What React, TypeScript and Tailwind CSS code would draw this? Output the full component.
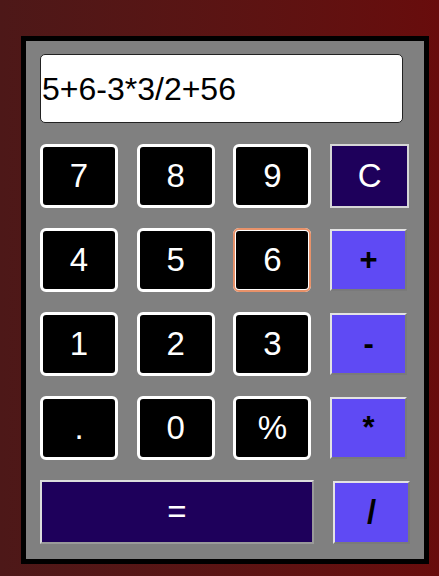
import React from 'react';

const NUM =
  'h-[64px] w-[78px] rounded-[6px] border-[3px] border-white bg-black text-white text-[33px] flex items-center justify-center';
const OP =
  'h-[62px] w-[77px] border-2 border-t-[#e3e3e3] border-l-[#e3e3e3] border-r-[#7a7a7a] border-b-[#7a7a7a] bg-[#5f4af4] text-black text-[31px] font-bold flex items-center justify-center';

export default function App() {
  const rows = [
    ['7', '8', '9', 'C'],
    ['4', '5', '6', '+'],
    ['1', '2', '3', '-'],
    ['.', '0', '%', '*'],
  ];

  return (
    <div
      className="w-[439px] h-[576px] bg-gradient-to-r from-[#4d1818] to-[#680c0c] pt-[36px] pl-[21px]"
      style={{ fontFamily: '"Liberation Sans", Arial, sans-serif' }}
    >
      <div className="w-[408px] border-[5px] border-black bg-[#808080] pt-[13px] pl-[14px] pb-[15px]">
        <div className="w-[363px] h-[69px] rounded-[5px] border border-[#222] bg-white flex items-center pl-[1px] text-[32px] text-black">
          5+6-3*3/2+56
        </div>
        <div className="mt-[21px] grid grid-cols-[78px_78px_78px_79px] gap-x-[18.7px] gap-y-[20px]">
          {rows.flat().map((k) => {
            if (k === 'C') {
              return (
                <button
                  key={k}
                  className="h-[64px] w-[79px] border-2 border-[#d6d6d6] bg-[#1e005b] text-white text-[33px] flex items-center justify-center"
                >
                  C
                </button>
              );
            }
            if (['+', '-', '*'].includes(k)) {
              return (
                <div key={k} className="flex items-center h-[64px]">
                  <button className={OP}>{k}</button>
                </div>
              );
            }
            return (
              <button
                key={k}
                className={
                  k === '6'
                    ? NUM + ' outline-2 -outline-offset-2 outline-[#e8926a]'
                    : NUM
                }
              >
                {k}
              </button>
            );
          })}
        </div>
        <div className="mt-[20px] flex items-center gap-[19px]">
          <button className="h-[64px] w-[274px] border-2 border-t-[#dcdcdc] border-l-[#dcdcdc] border-r-[#9a9a9a] border-b-[#9a9a9a] bg-[#1e005b] text-white text-[33px] flex items-center justify-center">
            =
          </button>
          <button className="h-[63px] w-[77px] border-2 border-t-[#e3e3e3] border-l-[#e3e3e3] border-r-[#7a7a7a] border-b-[#7a7a7a] bg-[#5f4af4] text-black text-[33px] font-bold flex items-center justify-center">
            /
          </button>
        </div>
      </div>
    </div>
  );
}
